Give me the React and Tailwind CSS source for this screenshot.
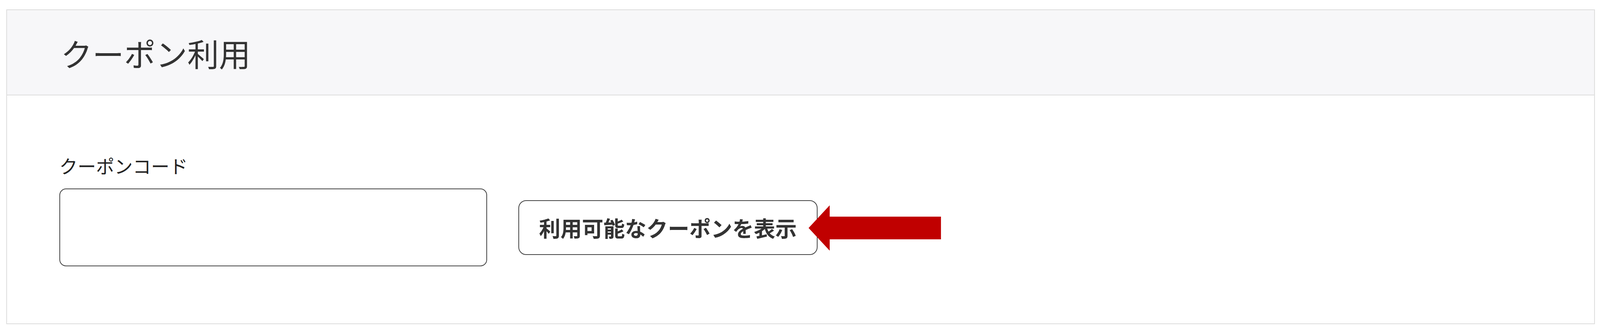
import React, { useState } from "react";

const JP = { fontFamily: '"Noto Sans CJK JP", "Noto Sans", sans-serif' };

// red pointer drawn over the button's right edge
function RedArrow() {
  return (
    <svg
      className="pointer-events-none absolute left-[18.159vw] top-[13px] h-[116px] w-[8.273vw]"
      viewBox="0 0 364 116"
      preserveAspectRatio="none"
    >
      <polygon
        points="0,58 58,0 58,29 364,29 364,87 58,87 58,116"
        fill="#c00000"
      />
    </svg>
  );
}

export default function App() {
  const [code, setCode] = useState("");

  return (
    <div className="min-h-screen bg-white pt-[24px]" style={JP}>
      <div className="ml-[0.386vw] mr-[0.318vw] border-2 border-[#dddddd] bg-white">
        <div className="flex h-[218px] items-center border-b-2 border-[#dddddd] bg-[#f7f7f9] pl-[3.364vw]">
          <h1 className="text-[81px] font-normal leading-none text-[#333333]">
            クーポン利用
          </h1>
        </div>

        <div className="pl-[3.273vw] pt-[155px] pb-[146px]">
          <label className="mb-[36px] block text-[47px] leading-none text-[#222222]">
            クーポンコード
          </label>
          <div className="flex items-center gap-[1.955vw]">
            <input
              value={code}
              onChange={(e) => setCode(e.target.value)}
              className="h-[199px] w-[26.727vw] rounded-[17px] border-2 border-[#444444] bg-white px-[30px] text-[47px] outline-none"
            />
            <div className="relative">
              <button
                type="button"
                className="flex h-[140px] w-[18.705vw] items-center justify-center rounded-[20px] border-2 border-[#444444] bg-white text-[55px] font-bold leading-none text-[#333333]"
              >
                利用可能なクーポンを表示
              </button>
              <RedArrow />
            </div>
          </div>
        </div>
      </div>
    </div>
  );
}
